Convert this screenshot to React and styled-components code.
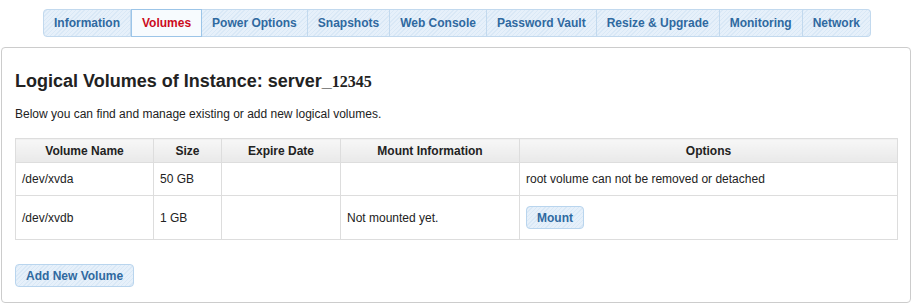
import React from "react";
import styled, { createGlobalStyle, css } from "styled-components";

const tabs = [
  "Information",
  "Volumes",
  "Power Options",
  "Snapshots",
  "Web Console",
  "Password Vault",
  "Resize & Upgrade",
  "Monitoring",
  "Network",
];

const volumes = [
  { name: "/dev/xvda", size: "50 GB", expire: "", mount: "", root: true },
  { name: "/dev/xvdb", size: "1 GB", expire: "", mount: "Not mounted yet.", root: false },
];

export default function App() {
  return (
    <>
      <GlobalStyle />
      <TabBar>
        {tabs.map((tab, i) => (
          <Tab key={tab} $active={tab === "Volumes"} $first={i === 0} $last={i === tabs.length - 1}>
            {tab}
          </Tab>
        ))}
      </TabBar>
      <Panel>
        <Title>
          Logical Volumes of Instance: server_<Serial>12345</Serial>
        </Title>
        <Intro>Below you can find and manage existing or add new logical volumes.</Intro>
        <Table>
          <colgroup>
            <col style={{ width: 138 }} />
            <col style={{ width: 68 }} />
            <col style={{ width: 119 }} />
            <col style={{ width: 179 }} />
            <col />
          </colgroup>
          <thead>
            <tr>
              <Th>Volume Name</Th>
              <Th>Size</Th>
              <Th>Expire Date</Th>
              <Th>Mount Information</Th>
              <Th>Options</Th>
            </tr>
          </thead>
          <tbody>
            {volumes.map((v) => (
              <tr key={v.name}>
                <Td>{v.name}</Td>
                <Td>{v.size}</Td>
                <Td>{v.expire}</Td>
                <Td>{v.mount}</Td>
                <Td>
                  {v.root ? "root volume can not be removed or detached" : <Button $small>Mount</Button>}
                </Td>
              </tr>
            ))}
          </tbody>
        </Table>
        <Footer>
          <Button>Add New Volume</Button>
        </Footer>
      </Panel>
    </>
  );
}

const GlobalStyle = createGlobalStyle`
  body {
    margin: 0;
    background: #fff;
    font-family: "Liberation Sans", Arial, sans-serif;
    color: #222;
  }
`;

const stripes = css`
  background-color: #dfecf8;
  background-image: repeating-linear-gradient(
    -45deg,
    #e6f0fa 0px,
    #e6f0fa 2px,
    #d9e8f6 2px,
    #d9e8f6 3px
  );
`;

const TabBar = styled.div`
  display: flex;
  justify-content: center;
  padding-top: 9px;
`;

const Tab = styled.div`
  ${stripes};
  height: 26px;
  line-height: 26px;
  padding: 0 10px;
  font-size: 12px;
  font-weight: bold;
  color: #2f69a0;
  border: 1px solid #c2d9ee;
  border-left: ${({ $first }) => ($first ? "1px solid #c2d9ee" : "none")};
  border-radius: ${({ $first, $last }) =>
    $first ? "4px 0 0 4px" : $last ? "0 4px 4px 0" : "0"};

  ${({ $active }) =>
    $active &&
    css`
      background: #f7fbfe;
      color: #cc0b1d;
      border: 1px solid #9cc5e8;
    `}
`;

const Panel = styled.div`
  box-sizing: border-box;
  width: 910px;
  height: 256px;
  margin: 10px 0 0 1px;
  padding: 0 12px 0 13px;
  border: 1px solid #cccccc;
  border-radius: 4px;
  display: flex;
  flex-direction: column;
`;

const Title = styled.h2`
  margin: 22px 0 0;
  font-size: 18px;
  line-height: 22px;
  font-weight: bold;
  color: #222;
`;

const Serial = styled.span`
  font-family: "Liberation Serif", "Times New Roman", serif;
  font-size: 16px;
`;

const Intro = styled.p`
  margin: 14px 0 0;
  font-size: 12px;
  line-height: 15px;
  color: #222;
`;

const Table = styled.table`
  margin-top: 16px;
  width: 100%;
  border-collapse: collapse;
  table-layout: fixed;
  font-size: 12px;
  color: #222;
`;

const Th = styled.th`
  height: 23px;
  padding: 0 6px;
  border: 1px solid #dddddd;
  background: linear-gradient(#f7f7f7, #e9e9e9);
  font-weight: bold;
  text-align: center;
  color: #222;
`;

const Td = styled.td`
  padding: 9px 6px;
  line-height: 14px;
  border: 1px solid #dddddd;
  text-align: left;
  vertical-align: middle;
`;

const Button = styled.button`
  ${stripes};
  display: inline-block;
  height: 23px;
  margin: ${({ $small }) => ($small ? "1px 0" : "0")};
  padding: 0 10px;
  border: 1px solid #b9d5ee;
  border-radius: 4px;
  font-family: "Liberation Sans", Arial, sans-serif;
  font-size: 12px;
  font-weight: bold;
  color: #2f69a0;
  cursor: pointer;
`;

const Footer = styled.div`
  margin-top: 24px;
`;
